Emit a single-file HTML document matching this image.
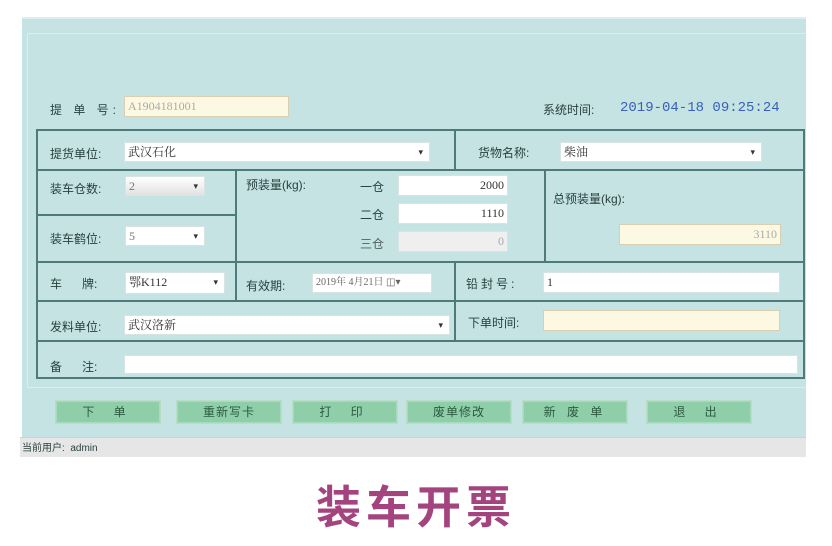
<!DOCTYPE html>
<html><head><meta charset="utf-8"><style>
*{margin:0;padding:0;box-sizing:border-box}
body{width:832px;height:546px;background:#fff;position:relative;overflow:hidden;font-family:"Liberation Serif","Noto Serif CJK SC","Noto Sans CJK SC",serif;font-size:12px;color:#2a3a3a}
.a{position:absolute}
.lbl{position:absolute;font-size:12px;color:#2a4040;font-family:"Liberation Sans","Noto Sans CJK SC",sans-serif;line-height:14px;white-space:nowrap}
.in{position:absolute;background:#fff;border:1px solid #d8e4e4;font-size:12px;line-height:18px;padding-left:3px;color:#333;white-space:nowrap;overflow:hidden}
.cr{background:#fdf8e1;border-color:#d8d0b0}
.dd::after{content:"▾";position:absolute;right:6px;top:0;font-size:9px;color:#333}
.hl{position:absolute;height:2px;background:#4f7a7a}
.vl{position:absolute;width:2px;background:#4f7a7a}
.btn{position:absolute;top:400px;height:24px;width:106px;background:#8ecfa9;border:1px solid #b8dcc8;box-shadow:inset 0 0 0 1px #a6dbbd;text-align:center;line-height:22px;font-size:12px;color:#2c5a40;font-family:"Liberation Sans","Noto Sans CJK SC",sans-serif;letter-spacing:8px}
</style></head><body>
<div class="a" style="left:22px;top:17px;width:784px;height:420px;background:#c5e3e3"></div>
<div class="a" style="left:22px;top:17px;width:784px;height:2px;background:#dcefef"></div>
<div class="a" style="left:27px;top:33px;width:779px;height:355px;border:1px solid #d9eeee;border-right:none"></div>
<div class="a" style="left:20px;top:437px;width:786px;height:20px;background:#e6e6e6;border-top:1px solid #d0d0d0"></div>
<div class="lbl" style="left:22px;top:442px;font-size:10px">当前用户:&nbsp; admin</div>

<div class="lbl" style="left:50px;top:103px;letter-spacing:4px">提 单 号:</div>
<div class="in cr" style="left:124px;top:96px;width:165px;height:21px;color:#aaa">A1904181001</div>
<div class="lbl" style="left:543px;top:103px">系统时间:</div>
<div class="lbl" style="left:620px;top:101px;color:#3a60b5;font-family:'Liberation Mono',monospace;font-size:14px">2019-04-18 09:25:24</div>

<!-- table lines -->
<div class="a" style="left:36px;top:129px;width:769px;height:250px;border:2px solid #4f7a7a"></div>
<div class="hl" style="left:36px;top:169px;width:769px"></div>
<div class="hl" style="left:36px;top:214px;width:200px"></div>
<div class="hl" style="left:36px;top:261px;width:769px"></div>
<div class="hl" style="left:36px;top:300px;width:769px"></div>
<div class="hl" style="left:36px;top:340px;width:769px"></div>
<div class="vl" style="left:454px;top:129px;height:41px"></div>
<div class="vl" style="left:235px;top:169px;height:132px"></div>
<div class="vl" style="left:544px;top:169px;height:93px"></div>
<div class="vl" style="left:454px;top:261px;height:80px"></div>

<div class="lbl" style="left:50px;top:147px">提货单位:</div>
<div class="in dd" style="left:124px;top:142px;width:306px;height:20px">武汉石化</div>
<div class="lbl" style="left:478px;top:146px">货物名称:</div>
<div class="in dd" style="left:560px;top:142px;width:202px;height:20px">柴油</div>

<div class="lbl" style="left:50px;top:182px">装车仓数:</div>
<div class="in dd" style="left:125px;top:176px;width:80px;height:20px;background:linear-gradient(#fff,#e2e2e2);color:#777">2</div>
<div class="lbl" style="left:50px;top:232px">装车鹤位:</div>
<div class="in dd" style="left:125px;top:226px;width:80px;height:20px;color:#777">5</div>

<div class="lbl" style="left:246px;top:178px">预装量(kg):</div>
<div class="lbl" style="left:360px;top:180px">一仓</div>
<div class="in" style="left:398px;top:175px;width:110px;height:21px;text-align:right;padding-right:3px">2000</div>
<div class="lbl" style="left:360px;top:208px">二仓</div>
<div class="in" style="left:398px;top:203px;width:110px;height:21px;text-align:right;padding-right:3px">1110</div>
<div class="lbl" style="left:360px;top:237px;color:#506060">三仓</div>
<div class="in" style="left:398px;top:231px;width:110px;height:21px;text-align:right;padding-right:3px;background:#efefef;color:#aaa">0</div>

<div class="lbl" style="left:553px;top:192px">总预装量(kg):</div>
<div class="in cr" style="left:619px;top:224px;width:162px;height:21px;text-align:right;padding-right:3px;color:#aaa">3110</div>

<div class="lbl" style="left:50px;top:277px;letter-spacing:0">车&nbsp;&nbsp;&nbsp;&nbsp;&nbsp;&nbsp;牌:</div>
<div class="in dd" style="left:125px;top:272px;width:100px;height:22px">鄂K112</div>
<div class="lbl" style="left:246px;top:279px">有效期:</div>
<div class="in" style="left:312px;top:273px;width:120px;height:20px;font-size:10px;color:#666">2019年 4月21日 ◫▾</div>
<div class="lbl" style="left:466px;top:277px;letter-spacing:3px">铅封号:</div>
<div class="in" style="left:543px;top:272px;width:237px;height:21px">1</div>

<div class="lbl" style="left:50px;top:320px">发料单位:</div>
<div class="in dd" style="left:124px;top:315px;width:326px;height:20px">武汉洛新</div>
<div class="lbl" style="left:468px;top:316px">下单时间:</div>
<div class="in cr" style="left:543px;top:310px;width:237px;height:21px"></div>

<div class="lbl" style="left:50px;top:360px">备&nbsp;&nbsp;&nbsp;&nbsp;&nbsp;&nbsp;注:</div>
<div class="in" style="left:124px;top:355px;width:674px;height:19px"></div>

<div class="btn" style="left:55px">下 单</div>
<div class="btn" style="left:176px;letter-spacing:1px">重新写卡</div>
<div class="btn" style="left:292px">打 印</div>
<div class="btn" style="left:406px;letter-spacing:1px">废单修改</div>
<div class="btn" style="left:522px;letter-spacing:4px">新 废 单</div>
<div class="btn" style="left:646px">退 出</div>

<div class="a" style="left:310px;top:476px;width:212px;text-align:center;font-family:'Noto Sans CJK SC',sans-serif;font-weight:bold;font-size:45px;line-height:56px;color:#a4447f;letter-spacing:5px">装车开票</div>
</body></html>
